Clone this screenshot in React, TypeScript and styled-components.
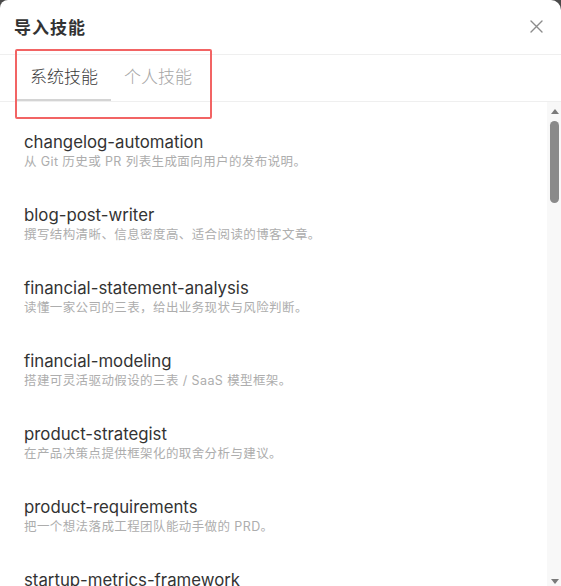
import React, { useState } from 'react';
import styled, { createGlobalStyle } from 'styled-components';

const GlobalStyle = createGlobalStyle`
  html, body, #root {
    height: 100%;
  }
  body {
    margin: 0;
    background: #4a4a4a;
    font-family: Inter, "Noto Sans CJK SC", sans-serif;
    overflow: hidden;
  }
`;

const Modal = styled.div`
  position: relative;
  height: 100vh;
  background: #fff;
  border-radius: 8px 10px 0 0;
  display: flex;
  flex-direction: column;
  overflow: hidden;
`;

const Header = styled.div`
  height: 55px;
  flex-shrink: 0;
  display: flex;
  align-items: center;
  justify-content: space-between;
  padding: 0 18px 2px 14px;
  border-bottom: 1px solid #efefef;
  box-sizing: border-box;
`;

const Title = styled.h2`
  margin: 0;
  font-size: 17px;
  font-weight: 700;
  color: #333;
  letter-spacing: 1px;
`;

const CloseButton = styled.button`
  border: 0;
  background: none;
  padding: 0;
  width: 14px;
  height: 14px;
  display: flex;
  align-items: center;
  justify-content: center;
  cursor: pointer;
`;

const TabBar = styled.div`
  height: 47px;
  flex-shrink: 0;
  display: flex;
  padding-left: 17px;
  border-bottom: 1px solid #efefef;
  box-sizing: border-box;
`;

const Tab = styled.div<{ $active?: boolean }>`
  display: flex;
  align-items: center;
  padding: 0 13px 3px 13px;
  font-size: 17px;
  font-weight: 300;
  color: ${p => (p.$active ? '#3a3a3a' : '#a6a6a6')};
  border-bottom: 2px solid ${p => (p.$active ? '#d4d4d4' : 'transparent')};
  cursor: pointer;
`;

const Highlight = styled.div`
  position: absolute;
  left: 15px;
  top: 49px;
  width: 193px;
  height: 66px;
  border: 2px solid #f26464;
  border-radius: 2px;
  pointer-events: none;
`;

const Body = styled.div`
  flex: 1;
  min-height: 0;
  display: flex;
`;

const List = styled.div`
  flex: 1;
  overflow: hidden;
  padding-top: 13px;
`;

const Item = styled.div`
  padding: 16px 24px 17px;
`;

const ItemName = styled.div`
  font-size: 16.8px;
  line-height: 22px;
  color: #333;
`;

const ItemDesc = styled.div`
  font-size: 12.5px;
  line-height: 18px;
  color: #adadad;
  letter-spacing: 0.4px;
`;

const ScrollTrack = styled.div`
  width: 14px;
  flex-shrink: 0;
  background: #f8f8f8;
  display: flex;
  flex-direction: column;
  align-items: center;
  padding: 7px 0 2px 1px;
  box-sizing: border-box;
`;

const Arrow = styled.div<{ $down?: boolean }>`
  width: 0;
  height: 0;
  border-left: 4px solid transparent;
  border-right: 4px solid transparent;
  ${p =>
    p.$down
      ? 'border-top: 5px solid #7a7a7a; margin-top: auto;'
      : 'border-bottom: 5px solid #7a7a7a;'}
`;

const Thumb = styled.div`
  width: 9px;
  height: 82px;
  margin-top: 7px;
  border-radius: 5px;
  background: #8a8a8a;
`;

const skills = [
  { name: 'changelog-automation', desc: '从 Git 历史或 PR 列表生成面向用户的发布说明。' },
  { name: 'blog-post-writer', desc: '撰写结构清晰、信息密度高、适合阅读的博客文章。' },
  { name: 'financial-statement-analysis', desc: '读懂一家公司的三表，给出业务现状与风险判断。' },
  { name: 'financial-modeling', desc: '搭建可灵活驱动假设的三表 / SaaS 模型框架。' },
  { name: 'product-strategist', desc: '在产品决策点提供框架化的取舍分析与建议。' },
  { name: 'product-requirements', desc: '把一个想法落成工程团队能动手做的 PRD。' },
  { name: 'startup-metrics-framework', desc: '为早期创业公司搭建核心指标体系与看板。' },
];

export default function App() {
  const [tab, setTab] = useState(0);
  return (
    <>
      <GlobalStyle />
      <Modal>
        <Header>
          <Title>导入技能</Title>
          <CloseButton aria-label="关闭">
            <svg width="13" height="13" viewBox="0 0 13 13">
              <path d="M1 1L12 12M12 1L1 12" stroke="#8c8c8c" strokeWidth="1.4" strokeLinecap="round" />
            </svg>
          </CloseButton>
        </Header>
        <TabBar>
          <Tab $active={tab === 0} onClick={() => setTab(0)}>系统技能</Tab>
          <Tab $active={tab === 1} onClick={() => setTab(1)}>个人技能</Tab>
        </TabBar>
        <Body>
          <List>
            {skills.map(s => (
              <Item key={s.name}>
                <ItemName>{s.name}</ItemName>
                <ItemDesc>{s.desc}</ItemDesc>
              </Item>
            ))}
          </List>
          <ScrollTrack>
            <Arrow />
            <Thumb />
            <Arrow $down />
          </ScrollTrack>
        </Body>
        <Highlight />
      </Modal>
    </>
  );
}
